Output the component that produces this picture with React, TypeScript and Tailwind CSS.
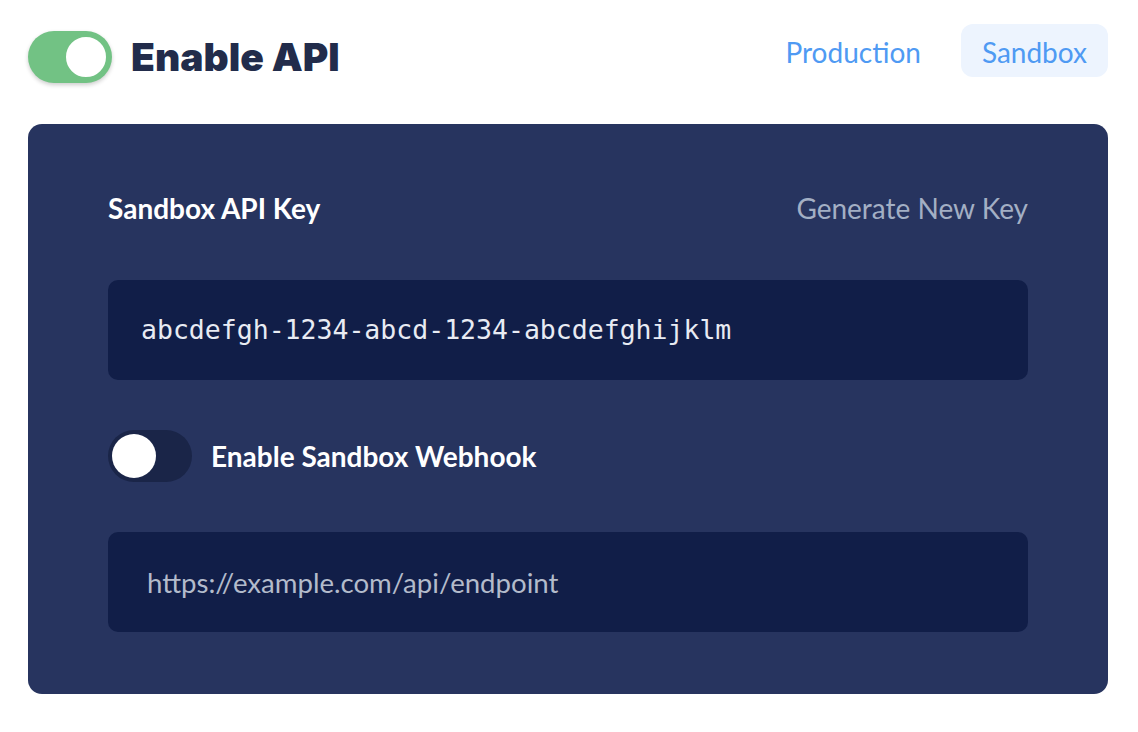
import { useState } from "react";

function Toggle({ on, onClick, dark }: { on: boolean; onClick: () => void; dark?: boolean }) {
  if (dark) {
    return (
      <button
        onClick={onClick}
        className="relative w-[84px] h-[52px] rounded-full bg-[#1a2548] shrink-0"
      >
        <span
          className={
            "absolute top-[4px] w-[44px] h-[44px] rounded-full bg-white " +
            (on ? "left-[36px]" : "left-[4px]")
          }
        />
      </button>
    );
  }
  return (
    <button
      onClick={onClick}
      className="relative w-[84px] h-[52px] rounded-full bg-[#72c284] shadow-[0_2px_4px_rgba(0,0,0,0.2)] shrink-0"
    >
      <span
        className={
          "absolute top-[3px] w-[46px] h-[46px] rounded-full bg-white border-[3px] border-[#72c284] " +
          (on ? "left-[35px]" : "left-[3px]")
        }
      />
    </button>
  );
}

export default function App() {
  const [apiOn, setApiOn] = useState(true);
  const [hookOn, setHookOn] = useState(false);
  const [tab, setTab] = useState("sandbox");

  return (
    <div className="w-[1138px] h-[732px] bg-white pl-[28px] pr-[30px] pt-[24px] font-['Lato','Noto_Sans',sans-serif]">
      <div className="flex items-start justify-between h-[53px]">
        <div className="flex items-center gap-[19px] mt-[7px]">
          <Toggle on={apiOn} onClick={() => setApiOn(!apiOn)} />
          <h1 className="text-[39px] font-black text-[#222c4b] font-['Inter',sans-serif] leading-none -mt-[2px]">
            Enable API
          </h1>
        </div>
        <div className="flex items-center gap-[16px]">
          <button
            onClick={() => setTab("production")}
            className={
              "h-[53px] px-[24px] pt-[3px] rounded-[12px] text-[28px] leading-none text-[#4f9af3] " +
              (tab === "production" ? "bg-[#edf4fe]" : "")
            }
          >
            Production
          </button>
          <button
            onClick={() => setTab("sandbox")}
            className={
              "h-[53px] px-[21px] pt-[3px] rounded-[12px] text-[28px] leading-none text-[#4f9af3] " +
              (tab === "sandbox" ? "bg-[#edf4fe]" : "")
            }
          >
            Sandbox
          </button>
        </div>
      </div>

      <div className="mt-[47px] h-[570px] rounded-[14px] bg-[#27345f] px-[80px] pt-[66px]">
        <div className="flex items-center justify-between h-[36px]">
          <span className="text-[28px] font-bold text-white leading-none">Sandbox API Key</span>
          <button className="text-[28px] text-[#a3afc4] leading-none">Generate New Key</button>
        </div>

        <div className="mt-[54px] h-[100px] rounded-[10px] bg-[#111e48] flex items-center px-[33px]">
          <span className="text-[26.5px] text-[#e8ebf3] font-['DejaVu_Sans_Mono',monospace]">
            abcdefgh-1234-abcd-1234-abcdefghijklm
          </span>
        </div>

        <div className="mt-[50px] flex items-center gap-[19px]">
          <Toggle dark on={hookOn} onClick={() => setHookOn(!hookOn)} />
          <span className="text-[28px] font-bold text-white">Enable Sandbox Webhook</span>
        </div>

        <input
          placeholder="https://example.com/api/endpoint"
          className="mt-[50px] w-full h-[100px] rounded-[10px] bg-[#111e48] px-[39px] text-[27.6px] text-white placeholder:text-[#b3bbcb] outline-none"
        />
      </div>
    </div>
  );
}
